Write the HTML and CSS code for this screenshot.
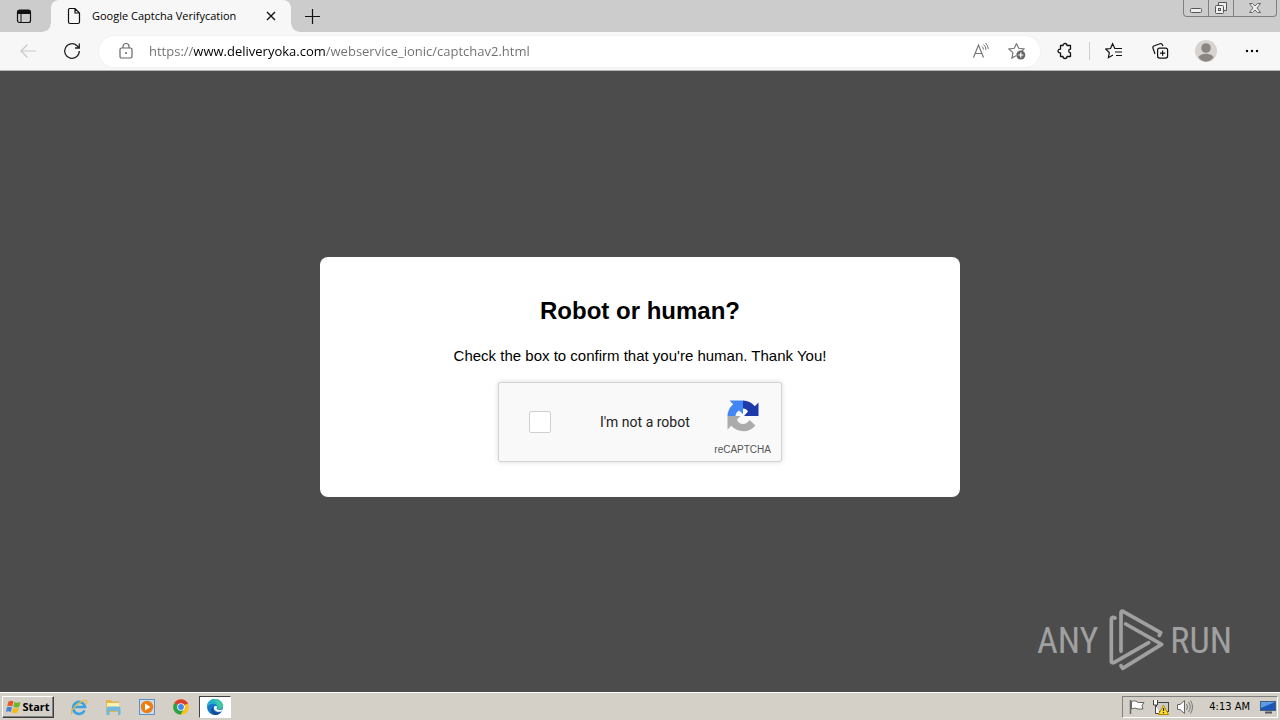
FILE: index.html
```html
<!DOCTYPE html>
<html lang="en">
<head>
	<meta charset="utf-8">
	<meta name="viewport" content="width=device-width, initial-scale=1">
	<title>Google Captcha Verifycation</title>
	<link rel="stylesheet" href="styles.css">
</head>
<body>
	<!-- tab strip -->
	<header class="tabs">
		<button class="tab-menu" aria-label="Tab actions">
			<svg width="16" height="16" viewBox="0 0 16 16"><rect x="1.5" y="2" width="13" height="12.5" rx="2" fill="none" stroke="#111" stroke-width="1.2"/><path d="M1.5 6V4a2 2 0 0 1 2-2h9a2 2 0 0 1 2 2v2z" fill="#111"/><path d="M5 5v9.500" stroke="#111"/></svg>
		</button>
		<div class="tab">
			<svg width="16" height="18" viewBox="0 0 16 18"><path d="M3.500 1.500H9l4.500 4.500v9a1.500 1.500 0 0 1-1.500 1.500H4A1.500 1.500 0 0 1 2.500 15V3a1.500 1.500 0 0 1 1-1.500zM9 1.500V6h4.500" fill="none" stroke="#111" stroke-width="1.200"/></svg>
			<span class="tab-title">Google Captcha Verifycation</span>
			<button class="tab-close" aria-label="Close tab"><svg width="10" height="10" viewBox="0 0 10 10"><path d="M1 1l8 8M9 1L1 9" stroke="#111" stroke-width="1.400"/></svg></button>
		</div>
		<button class="tab-new" aria-label="New tab"><svg width="15" height="15" viewBox="0 0 15 15"><path d="M7.500 0v15M0 7.500h15" stroke="#111" stroke-width="1.200"/></svg></button>
		<div class="win-buttons">
			<button aria-label="Minimize"><svg width="14" height="14" viewBox="0 0 14 14"><rect x="1.500" y="7.500" width="11" height="4" rx="1" fill="#eee" stroke="#555"/></svg></button>
			<button aria-label="Restore"><svg width="14" height="14" viewBox="0 0 14 14"><path d="M4.500 4V1.500h8v8H10" fill="#eee" stroke="#555"/><rect x="1.500" y="4.500" width="8" height="8" rx="1" fill="#eee" stroke="#555"/><rect x="4.500" y="7.500" width="2" height="2" fill="none" stroke="#555"/></svg></button>
			<button class="win-close" aria-label="Close"><svg width="14" height="14" viewBox="0 0 14 14"><path d="M1.500 2.500h3L7 5l2.500-2.500h3L9 7l3.500 4.500h-3L7 9l-2.500 2.500h-3L5 7z" fill="#eee" stroke="#666"/></svg></button>
		</div>
	</header>

	<!-- address bar -->
	<nav class="toolbar">
		<button class="nav-button" aria-label="Back" disabled><svg width="18" height="16" viewBox="0 0 18 16"><path d="M17 8H2M8.500 1.500L2 8l6.500 6.500" fill="none" stroke="#c9c9c9" stroke-width="1.200"/></svg></button>
		<button class="nav-button" aria-label="Refresh"><svg width="18" height="18" viewBox="0 0 18 18"><path d="M16.300 9A7.300 7.300 0 1 1 14 3.700L16.300 6M16.300 1.500V6H12" fill="none" stroke="#222" stroke-width="1.300"/></svg></button>
		<form class="address">
			<svg width="16" height="18" viewBox="0 0 16 18"><rect x="2" y="6" width="12" height="10" rx="1.500" fill="none" stroke="#666" stroke-width="1.200"/><path d="M5 6V4.500a3 3 0 0 1 6 0V6" fill="none" stroke="#666" stroke-width="1.200"/><circle cx="8" cy="11" r="1" fill="#666"/></svg>
			<input type="text" class="url" aria-label="Address" value="https://www.deliveryoka.com/webservice_ionic/captchav2.html">
			<button type="button" aria-label="Read aloud"><svg width="18" height="18" viewBox="0 0 18 18"><path d="M1.500 15.500L6.500 3l5 12.500M3.200 11.500h6.600" fill="none" stroke="#767676" stroke-width="1.200"/><path d="M10 4.500a4 4 0 0 1 1.500 3M11.500 2.500a6.500 6.500 0 0 1 2.500 5.500M13.500 1a9 9 0 0 1 2.800 6" fill="none" stroke="#767676"/></svg></button>
			<button type="button" aria-label="Add to favorites"><svg width="18" height="18" viewBox="0 0 18 18"><path d="M8.500 1.500l2.200 4.800 5.300.7-3 3M8.500 1.500L6.300 6.300 1 7l3.900 3.600L3.900 16l4-2.200" fill="none" stroke="#777" stroke-width="1.200"/><circle cx="12.800" cy="13" r="4.500" fill="#666"/><path d="M12.800 10.500v5M10.300 13h5" stroke="#fff" stroke-width="1.200"/></svg></button>
		</form>
		<div class="tools">
			<button aria-label="Extensions"><svg width="18" height="18" viewBox="0 0 18 18"><path d="M4.500 3.500H7a2 2 0 0 1 4 0h3.500v3.700a1.800 1.800 0 1 0 0 3.600v3.700H11a2 2 0 0 1-4 0H4.500v-3.700a1.900 1.900 0 1 1 0-3.600z" fill="none" stroke="#111" stroke-width="1.300" stroke-linejoin="round"/></svg></button>
			<span class="divider"></span>
			<button aria-label="Favorites"><svg width="18" height="18" viewBox="0 0 18 18"><path d="M11 6.500H9.800L7.600 1.800 5.500 6.500l-4.700.6 3.500 3.400-.9 5.200 4.600-2.600M11 6.500h6M10 10h7M11 13.500h6" fill="none" stroke="#111" stroke-width="1.200"/></svg></button>
			<button aria-label="Collections"><svg width="18" height="18" viewBox="0 0 18 18"><rect x="6.600" y="6.100" width="10" height="10" rx="2" fill="none" stroke="#111" stroke-width="1.200"/><path d="M11.600 8.500v5.200M9 11.100h5.200M4 12L2 6.200A2 2 0 0 1 3.300 3.700L9 1.700a2 2 0 0 1 2.500 1.200l.4 1.200" fill="none" stroke="#111" stroke-width="1.200"/></svg></button>
			<button aria-label="Profile"><svg width="22" height="22" viewBox="0 0 22 22"><circle cx="11" cy="11" r="11" fill="#d6d3d0"/><circle cx="11" cy="8" r="4.800" fill="#8c8682"/><path d="M3.500 17.500C5 12.500 17 12.500 18.500 17.500 15 23 7 23 3.500 17.500z" fill="#8c8682"/></svg></button>
			<button aria-label="Settings and more"><svg width="16" height="4" viewBox="0 0 16 4"><circle cx="3" cy="2" r="1.200"/><circle cx="8" cy="2" r="1.200"/><circle cx="13" cy="2" r="1.200"/></svg></button>
		</div>
	</nav>

	<!-- page -->
	<main class="page">
		<section class="card">
			<h2>Robot or human?</h2>
			<p>Check the box to confirm that you're human. Thank You!</p>
			<div class="captcha">
				<input type="checkbox" id="robot">
				<label for="robot">I'm not a robot</label>
				<div class="brand">
					<svg width="32" height="32" viewBox="0 0 64 64"><path d="M63 32V5l-7.500 7.400A32 32 0 0 0 32 1v16c5 0 8 2 10 6l-8 9z" fill="#1c3aa9"/><path d="M32 1H5l7.400 7.500A32 32 0 0 0 1 32h16c0-5 3-9 7-11l8 7z" fill="#4285f4"/><path d="M1 32v27l7.500-7.400A32 32 0 0 0 57 51L45 40c-3 5-8 8-13 8-6 0-11-4-12-9l7-7z" fill="#ababab"/></svg>
					<span>reCAPTCHA</span>
				</div>
			</div>
		</section>
		<div class="watermark">
			<span>ANY</span>
			<svg width="58" height="64" viewBox="12 12 174 192"><path d="M51 139V23q0-6 6-4l113 64-4 8M33 39q-11-5-11 4v128q4 4 9 1l103-59M65 57l108 61L56 190l-5-8" fill="none" stroke="#a0a0a0" stroke-width="11" stroke-linecap="round" stroke-linejoin="round"/></svg>
			<span>RUN</span>
		</div>
	</main>

	<!-- taskbar -->
	<footer class="taskbar">
		<button class="start">
			<svg width="16" height="16" viewBox="0 0 16 16"><path d="M2.500 2.500Q5 1 7.500 2.500L6.300 7.300Q4 6 1.200 7.300z" fill="#e8572a"/><path d="M8.500 3Q11 4.500 14.500 3l-1.200 4.800Q10 9 7.300 7.700z" fill="#6fb52c"/><path d="M1 8.300Q3.500 7 6 8.300L4.800 13Q2.500 11.700 0 13z" fill="#3e84d8"/><path d="M7 8.700q2.500 1.300 6 0L11.700 13.500Q8.500 15 5.800 13.500z" fill="#f6b91d"/></svg>
			Start
		</button>
		<div class="apps">
			<button aria-label="Internet Explorer"><svg width="18" height="18" viewBox="0 0 18 18"><path d="M14.500 12.500A6 6 0 1 1 15 9H4" fill="none" stroke="#3aa2e4" stroke-width="2.600"/><path d="M2 16C-1 12 12 1 16 2.500q1.500.8 0 3.500" fill="none" stroke="#e9b93a" stroke-width="1.300"/></svg></button>
			<button aria-label="Explorer"><svg width="18" height="18" viewBox="0 0 18 18"><path d="M2 2h5l1 1.500h7V14H2z" fill="#e3b54c"/><path d="M3 5h12v5H3z" fill="#fff1b0"/><path d="M4 8.500h10.500q2 0 2 2V17H14v-4H5.500v4H2.500v-7z" fill="#72b8dc"/></svg></button>
			<button aria-label="Media Player"><svg width="18" height="18" viewBox="0 0 18 18"><rect x="1.500" y="1.500" width="15" height="15" fill="#c7def2" stroke="#5e92c4"/><circle cx="9" cy="9" r="6.200" fill="#ef7c11"/><path d="M7 5.500v7L12.500 9z" fill="#fff"/></svg></button>
			<button aria-label="Chrome"><svg width="18" height="18" viewBox="0 0 18 18"><circle cx="9" cy="9" r="7.800" fill="#fbc116"/><path d="M9 9L2.250 5.100A7.800 7.800 0 0 1 15.750 5.100z" fill="#df3d30"/><path d="M9 9L2.250 5.100A7.800 7.800 0 0 0 8.500 16.800L12 11z" fill="#2ba24c"/><path d="M9 5.100h6.750v1H9z" fill="#df3d30"/><circle cx="9" cy="9" r="3.800" fill="#fff"/><circle cx="9" cy="9" r="2.900" fill="#4285f4"/></svg></button>
			<button class="active" aria-label="Edge"><svg width="18" height="18" viewBox="0 0 18 18"><circle cx="9" cy="9" r="8" fill="#1878c8"/><path d="M1 9C1 3 6 1 9 1c5 0 8 3.500 8 6.500 0 3-3 4-5 3.500-1-.3 0-1-.5-2.500C10.500 5 4 4 1 9z" fill="#3dc7a2"/><path d="M1 9C1 4 5 1 9 1 6 2 11 4 11 6.500 8 4 3.500 5 1 9z" fill="#27acd5"/><path d="M7.500 8.500c-2 4 2 7 7.500 5.500-2 3-5 3-6.500 3-4-1.500-4.500-6.500-1-8.500z" fill="#124d92"/><path d="M8 9c.5-1.500 3-1.500 3 0 0 1-1 1.500.5 2.500 1.500.8 3.500.5 5.300-.5L15 13.500c-4 1-7.500-1-7-4.500z" fill="#fff"/></svg></button>
		</div>
		<div class="tray">
			<svg width="18" height="18" viewBox="0 0 18 18"><path d="M2.500 2v14" stroke="#666" stroke-width="1.500"/><path d="M3.500 3.500q3-1.500 5.500 0 0 1 1.500 1h5.500l-2 3 1 3.500H10q-3-2-6.500 0z" fill="#fff" stroke="#666"/></svg>
			<svg width="18" height="18" viewBox="0 0 18 18"><rect x="4.500" y="4.500" width="12" height="9" fill="#ccc" stroke="#444"/><path d="M1.500 2v5h4V2M3.500 7v8.500H8" fill="#fff" stroke="#444"/><path d="M11.500 7l5 9.500h-10z" fill="#ffdc28" stroke="#b28c00"/><path d="M11.500 10v3M11.500 14v1.200" stroke="#222" stroke-width="1.200"/></svg>
			<svg width="18" height="18" viewBox="0 0 18 18"><path d="M1.500 6.500H4l4.500-4v13l-4.500-4H1.500z" fill="#fff" stroke="#666"/><path d="M10.500 6q2 3 0 6M12.500 4q3.500 5 0 10M14.500 2.500q4 6.500 0 13" fill="none" stroke="#777"/></svg>
			<time>4:13 AM</time>
			<svg width="16" height="16" viewBox="0 0 16 16"><rect x=".5" y="2.500" width="15" height="9" fill="#1b56b8" stroke="#41617f"/><path d="M1 3h14L1 9z" fill="#5f9be6"/><path d="M5 13.500h7" stroke="#556" stroke-width="2"/></svg>
		</div>
	</footer>
</body>
</html>
```
FILE: styles.css
```css
* {
	box-sizing: border-box;
}
body {
	margin: 0;
	height: 100vh;
	display: flex;
	flex-direction: column;
	font-family: "Liberation Sans", Arial, sans-serif;
}
button {
	display: flex;
	align-items: center;
	justify-content: center;
	padding: 0;
	border: 0;
	background: none;
}
svg {
	display: block;
	flex: none;
}

/* tab strip */
.tabs {
	display: flex;
	height: 32px;
	background: #cccccc;
	font-family: "Open Sans", "Noto Sans", sans-serif;
}
.tab-menu {
	width: 48px;
}
.tab {
	position: relative;
	display: flex;
	align-items: center;
	gap: 10px;
	width: 240px;
	margin-left: 3px;
	padding: 0 12px 0 15px;
	border-radius: 8px 8px 0 0;
	background: #f7f7f7;
}
/* curved feet of the tab */
.tab::before,
.tab::after {
	content: "";
	position: absolute;
	bottom: 0;
	width: 8px;
	height: 8px;
}
.tab::before {
	right: 100%;
	background: radial-gradient(circle at 0 0, #cccccc 7px, #f7f7f7 8px);
}
.tab::after {
	left: 100%;
	background: radial-gradient(circle at 100% 0, #cccccc 7px, #f7f7f7 8px);
}
.tab-title {
	flex: 1;
	font-size: 11px;
	line-height: 16px;
	white-space: nowrap;
}
.tab-close {
	width: 16px;
	height: 16px;
}
.tab-new {
	width: 42px;
}
.win-buttons {
	display: flex;
	height: 17px;
	margin-left: auto;
	margin-right: 3px;
	border: 1px solid #808080;
	border-top: 0;
	border-radius: 0 0 4px 4px;
}
.win-buttons button {
	width: 25px;
	border-right: 1px solid #808080;
}
.win-buttons .win-close {
	width: 42px;
	border-right: 0;
}

/* address bar */
.toolbar {
	display: flex;
	align-items: center;
	height: 39px;
	padding: 0 6px;
	background: #f7f7f7;
	border-bottom: 1px solid #b5b5b5;
}
.nav-button {
	width: 44px;
}
.address {
	display: flex;
	align-items: center;
	flex: 1;
	height: 31px;
	margin-left: 5px;
	padding: 0 14px 0 19px;
	border-radius: 16px;
	background: #ffffff;
	box-shadow: 0 0 1px 1px #f1f1f1;
}
.address button {
	width: 18px;
	margin-left: 18px;
}
.url {
	flex: 1;
	min-width: 0;
	margin-left: 15px;
	padding: 0;
	border: 0;
	outline: 0;
	font-family: "Open Sans", "Noto Sans", sans-serif;
	font-size: 13px;
	line-height: 20px;
	color: #6e6e6e;
	/* the host name is darker than the rest of the address */
	background: linear-gradient(90deg, #6e6e6e 45px, #000000 45px, #000000 176px, #6e6e6e 176px);
	-webkit-background-clip: text;
	background-clip: text;
	-webkit-text-fill-color: transparent;
}
.tools {
	display: flex;
	align-items: center;
	gap: 2px;
	margin-left: 3px;
}
.tools button {
	width: 44px;
}
.divider {
	width: 1px;
	height: 18px;
	background: #cfcfcf;
}

/* page */
.page {
	position: relative;
	flex: 1;
	display: flex;
	align-items: center;
	justify-content: center;
	padding-bottom: 10px;
	background: #4c4c4c;
}
.card {
	display: flex;
	flex-direction: column;
	align-items: center;
	width: 50%;
	padding: 40px 20px 35px;
	border-radius: 8px;
	background: #ffffff;
	text-align: center;
}
.card h2 {
	margin: 0;
	font-size: 24px;
	line-height: 28px;
}
.card p {
	margin: 20px 0 15px;
	font-size: 15px;
	line-height: 22px;
}
.captcha {
	display: flex;
	align-items: center;
	width: 284px;
	height: 80px;
	padding: 0 10px 0 30px;
	border: 1px solid #d3d3d3;
	border-radius: 3px;
	background: #f9f9f9;
	box-shadow: 0 0 4px 1px rgba(0, 0, 0, 0.1);
}
.captcha input {
	appearance: none;
	width: 22px;
	height: 22px;
	margin: 0;
	border: 1px solid #d0d0d0;
	border-radius: 2px;
	background: #ffffff;
}
.captcha label {
	margin-left: 49px;
	font-family: Roboto, sans-serif;
	font-size: 14px;
	line-height: 18px;
	color: #222222;
	white-space: nowrap;
}
.brand {
	display: flex;
	flex-direction: column;
	align-items: center;
	gap: 12px;
	margin-left: auto;
	padding-top: 12px;
	font-size: 10px;
	line-height: 12px;
	color: #555555;
}
.watermark {
	position: absolute;
	right: 48px;
	bottom: 19px;
	display: flex;
	align-items: center;
	gap: 4px;
	color: #a0a0a0;
	font-family: "Roboto Condensed", "Open Sans", sans-serif;
	font-size: 36px;
	font-weight: 400;
	line-height: 64px;
}
.watermark svg {
	margin-left: 6px;
}

/* taskbar */
.taskbar {
	display: flex;
	align-items: center;
	height: 28px;
	padding: 0 2px;
	border-top: 1px solid #ffffff;
	background: #d4d0c8;
	font-family: "DejaVu Sans Condensed", "DejaVu Sans", sans-serif;
	font-size: 11px;
}
.start {
	width: 52px;
	height: 22px;
	border: 1px solid;
	border-color: #ffffff #404040 #404040 #ffffff;
	box-shadow: inset -1px -1px #808080;
	font-family: "Noto Sans", sans-serif;
	font-size: 11px;
	font-weight: bold;
}
.apps {
	display: flex;
	margin-left: 8px;
}
.apps button {
	width: 34px;
	height: 22px;
}
.apps .active {
	width: 32px;
	margin-left: 1px;
	border: 1px solid;
	border-color: #404040 #ffffff #ffffff #404040;
	background: #ffffff;
}
.tray {
	display: flex;
	align-items: center;
	gap: 6px;
	height: 22px;
	margin-left: auto;
	padding: 0 1px 0 5px;
	border: 1px solid;
	border-color: #808080 #ffffff #ffffff #808080;
}
.tray time {
	margin: 0 4px 0 9px;
}
```
